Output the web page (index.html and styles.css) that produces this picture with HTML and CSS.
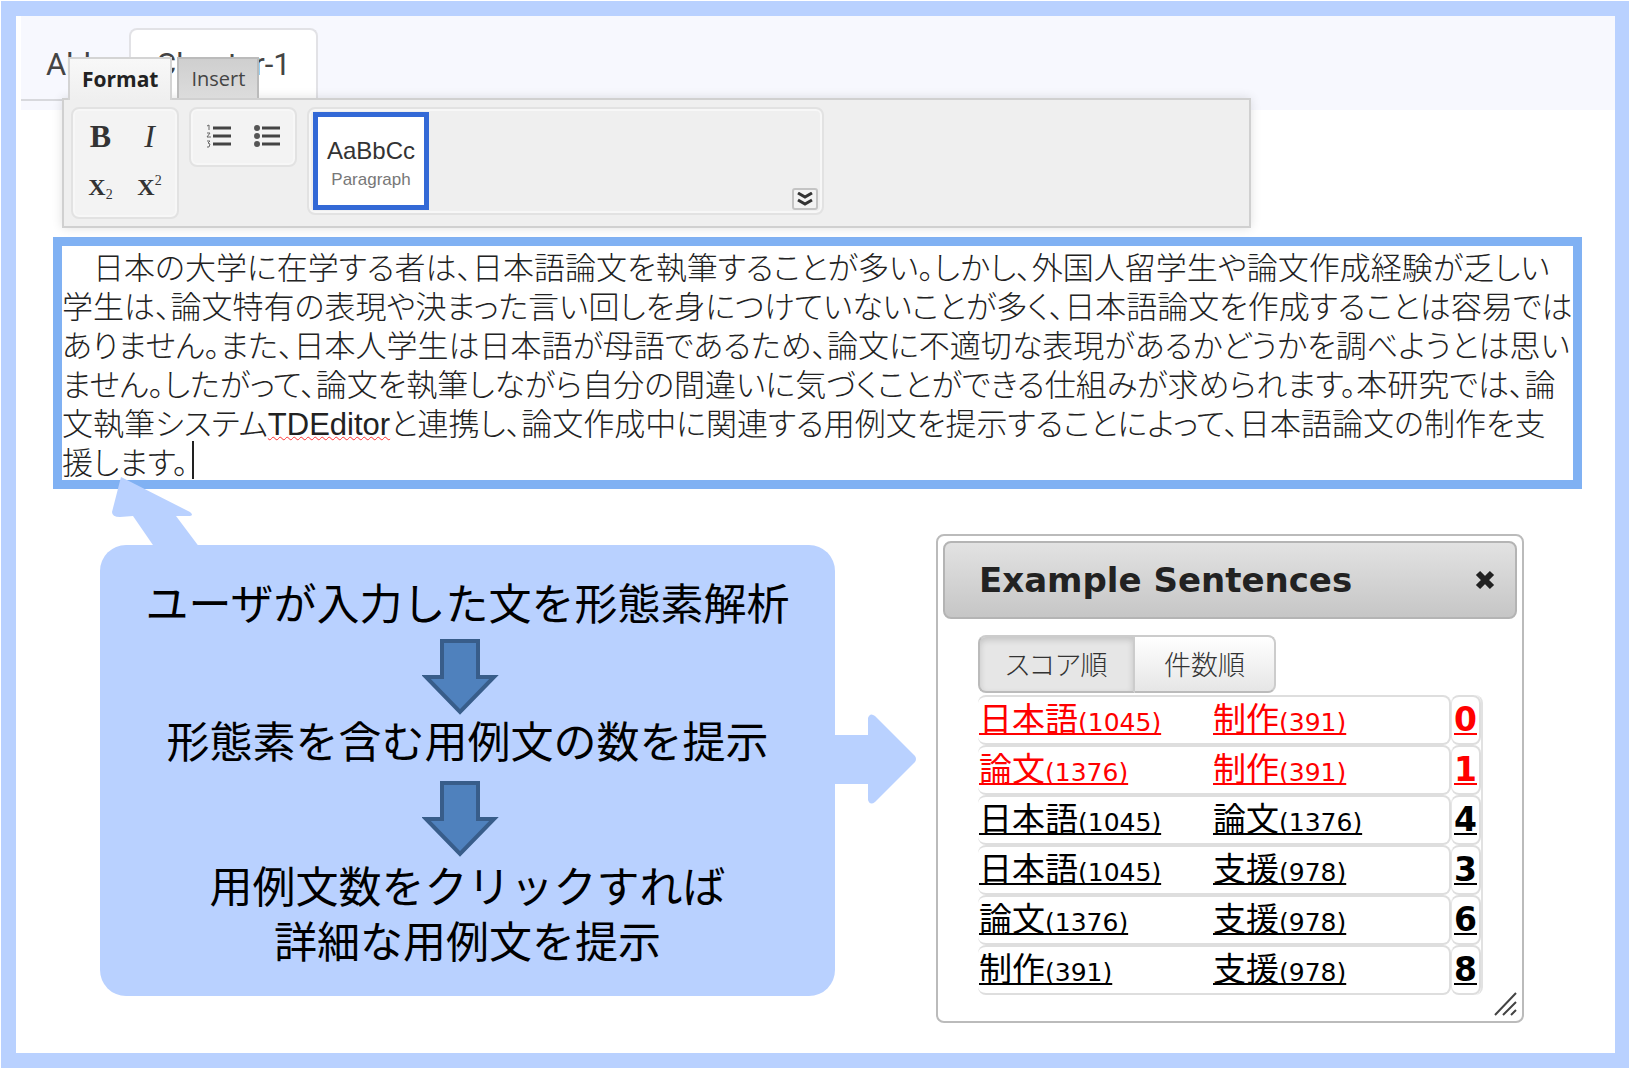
FILE: index.html
```html
<!DOCTYPE html>
<html lang="ja">
<head>
<meta charset="utf-8">
<title>TDEditor - Example Sentences</title>
<link rel="stylesheet" href="styles.css">
</head>
<body>
<main class="frame">
  <nav class="chapters">
    <button type="button" class="chapter">Abb</button>
    <button type="button" class="chapter chapter-active">Chapter-1</button>
  </nav>

  <section class="ribbon" aria-label="Toolbar">
    <div class="ribbon-tabs">
      <button type="button" class="ribbon-tab ribbon-tab-active">Format</button>
      <button type="button" class="ribbon-tab">Insert</button>
    </div>
    <div class="ribbon-body">
      <div class="group group-text">
        <button type="button" class="tool tool-bold">B</button>
        <button type="button" class="tool tool-italic">I</button>
        <button type="button" class="tool tool-script">X<sub>2</sub></button>
        <button type="button" class="tool tool-script">X<sup>2</sup></button>
      </div>
      <div class="group group-list">
        <button type="button" class="tool" aria-label="Numbered list">
          <svg width="26" height="24" viewBox="0 0 26 24" fill="none" stroke="#444" stroke-width="2">
            <path d="M7 4H25M7 12H25M7 20H25" stroke-width="3"/>
            <path d="M1 2l2-1v5M1 9h3l-3 4h4M1 17h3l-2 2 2 1-1 3H1" stroke="#666" stroke-width="1"/>
          </svg>
        </button>
        <button type="button" class="tool" aria-label="Bulleted list">
          <svg width="26" height="24" viewBox="0 0 26 24" fill="#555" stroke="#444" stroke-width="3">
            <path d="M8 4H26M8 12H26M8 20H26"/>
            <g stroke="none"><circle cx="3" cy="4" r="3"/><circle cx="3" cy="12" r="3"/><circle cx="3" cy="20" r="3"/></g>
          </svg>
        </button>
      </div>
      <div class="group group-style">
        <button type="button" class="style-card">
          <span class="style-sample">AaBbCc</span>
          <span class="style-name">Paragraph</span>
        </button>
        <button type="button" class="more" aria-label="More styles">
          <svg width="16" height="14" viewBox="0 0 16 14" fill="none" stroke="#333" stroke-width="3"><path d="M1 1l7 4 7-4M1 8l7 4 7-4"/></svg>
        </button>
      </div>
    </div>
  </section>

  <div class="editor" role="textbox" aria-multiline="true" aria-label="本文" contenteditable="true" spellcheck="false">　日本の大学に在学する者は、日本語論文を執筆することが多い。しかし、外国人留学生や論文作成経験が乏しい<br>学生は、論文特有の表現や決まった言い回しを身につけていないことが多く、日本語論文を作成することは容易では<br>ありません。また、日本人学生は日本語が母語であるため、論文に不適切な表現があるかどうかを調べようとは思い<br>ません。したがって、論文を執筆しながら自分の間違いに気づくことができる仕組みが求められます。本研究では、論<br>文執筆システム<span class="misspelt">TDEditor</span>と連携し、論文作成中に関連する用例文を提示することによって、日本語論文の制作を支<br>援します。<span class="caret"></span></div>

  <div class="lower">
    <section class="callout">
      <svg class="pointer-up" width="90" height="72" viewBox="0 0 90 72" fill="#b9d1ff"><path d="M11 1L80 36Q84 39 80 40H66L90 72H45L23 40L10 41Q2 41 2 36Z"/></svg>
      <svg class="pointer-right" width="84" height="92" viewBox="0 0 84 92" fill="#b9d1ff"><path d="M0 22H33V5Q35 -1 40 3L80 43Q82 46 80 49L40 89Q35 93 33 87V71H0Z"/></svg>
      <p>ユーザが入力した文を形態素解析</p>
      <svg class="down down-first" width="92" height="77" viewBox="0 0 92 77" fill="#4f81bd" stroke="#385d8a" stroke-width="4"><path d="M20 2H56V38H72L38 73L4 38H20Z"/></svg>
      <p>形態素を含む用例文の数を提示</p>
      <svg class="down down-second" width="92" height="77" viewBox="0 0 92 77" fill="#4f81bd" stroke="#385d8a" stroke-width="4"><path d="M20 2H56V38H72L38 73L4 38H20Z"/></svg>
      <p>用例文数をクリックすれば<br>詳細な用例文を提示</p>
    </section>

    <section class="dialog" role="dialog" aria-labelledby="dialog-title">
      <header class="dialog-head">
        <h2 id="dialog-title">Example Sentences</h2>
        <button type="button" class="close" aria-label="Close">
          <svg width="20" height="20" viewBox="0 0 20 20" stroke="#222" stroke-width="6"><path d="M3 3L17 17M17 3L3 17"/></svg>
        </button>
      </header>
      <div class="dialog-body">
        <div class="sort">
          <button type="button" class="sort-button sort-on" aria-pressed="true">スコア順</button>
          <button type="button" class="sort-button" aria-pressed="false">件数順</button>
        </div>
        <table class="results">
          <tbody>
            <tr class="hot"><td><div class="pair"><a href="#">日本語<small>(1045)</small></a><a href="#">制作<small>(391)</small></a></div></td><td class="count"><a href="#">0</a></td></tr>
            <tr class="hot"><td><div class="pair"><a href="#">論文<small>(1376)</small></a><a href="#">制作<small>(391)</small></a></div></td><td class="count"><a href="#">1</a></td></tr>
            <tr><td><div class="pair"><a href="#">日本語<small>(1045)</small></a><a href="#">論文<small>(1376)</small></a></div></td><td class="count"><a href="#">4</a></td></tr>
            <tr><td><div class="pair"><a href="#">日本語<small>(1045)</small></a><a href="#">支援<small>(978)</small></a></div></td><td class="count"><a href="#">3</a></td></tr>
            <tr><td><div class="pair"><a href="#">論文<small>(1376)</small></a><a href="#">支援<small>(978)</small></a></div></td><td class="count"><a href="#">6</a></td></tr>
            <tr><td><div class="pair"><a href="#">制作<small>(391)</small></a><a href="#">支援<small>(978)</small></a></div></td><td class="count"><a href="#">8</a></td></tr>
          </tbody>
        </table>
      </div>
      <svg class="grip" width="24" height="24" viewBox="0 0 24 24" stroke="#444" stroke-width="2"><path d="M1 23L22 1M9 23L22 10M17 23L22 18"/></svg>
    </section>
  </div>
</main>
</body>
</html>
```
FILE: styles.css
```css
* { box-sizing: border-box; }

body {
  margin: 0;
  padding: 1px 1px 2px;
  background: #fff;
  font-family: "Liberation Sans", "Noto Sans CJK JP", sans-serif;
  color: #222;
}

button {
  margin: 0;
  padding: 0;
  border: 0;
  background: none;
  font: inherit;
  color: inherit;
}

.frame {
  position: relative;
  min-height: calc(100vh - 2px);
  border: 15px solid #b9d1ff;
  border-right-width: 14px;
}

/* chapter tabs */
.chapters {
  display: flex;
  align-items: flex-start;
  height: 94px;
  margin-left: 5px;
  padding-top: 12px;
  background: linear-gradient(#d8d9dd, #d8d9dd) 0 83px / 200px 2px no-repeat #f7f8fe;
}

.chapter {
  height: 70px;
  padding: 2px 26px 0 23px;
  border: 2px solid transparent;
  border-bottom: 0;
  font-family: Roboto, sans-serif;
  font-size: 31px;
  line-height: 60px;
  color: #444;
}

.chapter-active {
  padding: 2px 25px 0;
  border-color: #e2e2e6;
  border-radius: 8px 8px 0 0;
  background: #fff;
}

/* floating ribbon */
.ribbon {
  position: absolute;
  top: 41px;
  left: 46px;
  right: 364px;
}

.ribbon-tabs {
  position: relative;
  z-index: 1;
  display: flex;
  align-items: flex-start;
  gap: 5px;
  height: 41px;
  padding-left: 6px;
}

.ribbon-tab {
  height: 41px;
  padding: 0 12px;
  border: 2px solid #bbb;
  border-bottom: 0;
  background: linear-gradient(#cfcfcf, #dcdcdc);
  font-family: "Open Sans", sans-serif;
  font-size: 20px;
  line-height: 39px;
  color: #444;
}

.ribbon-tab-active {
  height: 43px;
  border-color: #d4d4d4;
  background: linear-gradient(#f8f8f8, #efefef);
  font-size: 21px;
  font-weight: 700;
  color: #222;
}

.ribbon-body {
  display: flex;
  align-items: flex-start;
  gap: 10px;
  padding: 7px;
  border: 2px solid #d0d0d0;
  background: #efefef;
  box-shadow: 0 0 10px rgba(0, 0, 0, 0.12);
}

.group {
  border: 2px solid #e2e2e2;
  border-radius: 8px;
  background: #f3f3f3;
  box-shadow: inset 0 0 0 2px #f7f7f7;
}

.group-text {
  display: grid;
  grid-template-columns: 49px 49px;
  grid-template-rows: 51px 51px;
  padding: 2px 3px;
  height: 112px;
}

.group-list {
  display: flex;
  padding: 3px 4px 5px;
  height: 60px;
}

.group-list .tool { width: 48px; }

.tool {
  display: flex;
  align-items: center;
  justify-content: center;
  font-family: "Liberation Serif", serif;
  color: #333;
}

.tool-bold { font-size: 32px; font-weight: 700; }
.tool-italic { font-size: 32px; font-style: italic; }
.tool-script { font-size: 24px; font-weight: 700; }
.tool-script sub, .tool-script sup { font-size: 14px; font-weight: 400; line-height: 0; }
.tool-script sub { padding-top: 14px; }
.tool-script sup { padding-bottom: 14px; }

.group-style {
  display: flex;
  align-items: flex-start;
  justify-content: space-between;
  width: 517px;
  height: 108px;
  padding: 3px 4px;
  background: #efefef;
}

.style-card {
  display: flex;
  flex-direction: column;
  align-items: center;
  width: 116px;
  height: 98px;
  padding-top: 18px;
  border: 5px solid #3369d6;
  background: #fff;
}

.style-sample { font-size: 24px; line-height: 32px; color: #333; }
.style-name { font-size: 17px; line-height: 26px; color: #777; }

.more {
  display: flex;
  align-items: center;
  justify-content: center;
  align-self: flex-end;
  width: 26px;
  height: 22px;
  border: 2px solid #c4c4c4;
  border-radius: 3px;
  background: #f3f3f3;
}

/* text being written */
.editor {
  height: 252px;
  margin: 127px 33px 0 37px;
  border: 9px solid #80b1f3;
  background: #fff;
  font-family: "Noto Sans CJK JP", sans-serif;
  font-feature-settings: "palt";
  font-size: 31px;
  font-weight: 300;
  line-height: 39px;
  white-space: nowrap;
  color: #222;
}

.misspelt {
  font-family: "Liberation Sans", sans-serif;
  font-weight: 400;
  line-height: 1;
  text-decoration: underline wavy #f33 1px;
}

.caret {
  display: inline-block;
  width: 2px;
  height: 38px;
  margin-left: 4px;
  background: #222;
  vertical-align: top;
}

/* explanation and results */
.lower {
  display: grid;
  grid-template-columns: minmax(0, 735fr) minmax(0, 588fr);
  align-items: start;
  column-gap: 101px;
  padding: 45px 91px 30px 84px;
}

.callout {
  position: relative;
  margin-top: 11px;
  padding: 29px 0 29px;
  border-radius: 26px;
  background: #b9d1ff;
  font-family: "Noto Sans CJK JP", sans-serif;
  font-size: 43px;
  line-height: 55px;
  text-align: center;
  white-space: nowrap;
  color: #000;
}

.callout p { margin: 0; }

.down { display: block; margin: 0 auto; }
.down-first { margin-top: 10px; margin-bottom: -4px; }
.down-second { margin-top: 14px; margin-bottom: -1px; }

.pointer-up { position: absolute; left: 10px; top: -69px; }
.pointer-right { position: absolute; left: 100%; top: 168px; }

.dialog {
  position: relative;
  height: 489px;
  padding: 5px;
  border: 2px solid #bbb;
  border-radius: 8px;
  background: #fff;
}

.dialog-head {
  display: flex;
  align-items: center;
  justify-content: space-between;
  height: 78px;
  padding: 0 20px 0 34px;
  border: 2px solid #b4b4b4;
  border-radius: 8px;
  background: linear-gradient(#e2e2e2, #c6c6c6);
}

.dialog-head h2 {
  margin: 0;
  font-family: "DejaVu Sans", sans-serif;
  font-size: 34px;
  font-weight: 700;
  white-space: nowrap;
}

.close { display: flex; }

.dialog-body { padding: 16px 34px 0 35px; }

.sort { display: flex; margin-bottom: 2px; }

.sort-button {
  min-width: 141px;
  height: 58px;
  padding: 0 20px;
  border: 2px solid #ccc;
  border-bottom-color: #bbb;
  border-left: 0;
  border-radius: 0 8px 8px 0;
  background: linear-gradient(#fff, #e6e6e6);
  font-family: "Noto Sans CJK JP", sans-serif;
  font-feature-settings: "palt";
  font-size: 27px;
  font-weight: 300;
  line-height: 50px;
  color: #333;
}

.sort-on {
  min-width: 157px;
  border-left: 2px solid #bbb;
  border-radius: 8px 0 0 8px;
  background: #e6e6e6;
  box-shadow: inset 0 3px 6px rgba(0, 0, 0, 0.15);
}

.results {
  width: 100%;
  border-collapse: separate;
  border-spacing: 0;
  border-right: 2px solid #e2e2e2;
  border-radius: 8px;
  font-family: "DejaVu Sans", "Noto Sans CJK JP", sans-serif;
  font-size: 33px;
  line-height: 46px;
}

.results td {
  height: 50px;
  padding: 0;
  border: 2px solid #dedede;
  border-left: 0;
  border-radius: 8px;
}

.results td.count {
  width: 30px;
  border-left: 1px solid #e6e6e6;
  font-weight: 700;
  text-align: center;
}

.pair {
  display: grid;
  grid-template-columns: 234px 1fr;
  height: 46px;
  padding-left: 1px;
}

.pair a { justify-self: start; white-space: nowrap; }
.pair small { font-size: 25px; }

.results a {
  color: #000;
  text-decoration: underline 2px;
  text-decoration-skip-ink: none;
  text-underline-offset: 2px;
}

.results .hot a { color: #f00; }

.grip { position: absolute; right: 4px; bottom: 5px; }
```
